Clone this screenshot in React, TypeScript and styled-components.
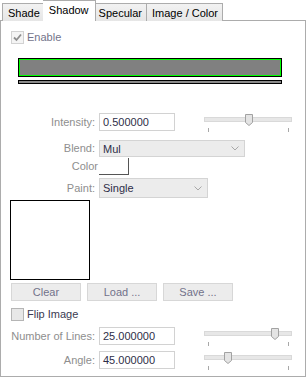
import React from "react";
import styled, { createGlobalStyle } from "styled-components";

const Global = createGlobalStyle`
  html, body { margin: 0; padding: 0; background: #ffffff; overflow: hidden; }
  body { font-family: "Liberation Sans", Arial, sans-serif; font-size: 11px; }
  * { box-sizing: border-box; }
`;

const Root = styled.div`
  width: 306px;
  height: 377px;
  display: flex;
  flex-direction: column;
`;

const TabBar = styled.div`
  display: flex;
  align-items: flex-start;
  height: 21px;
  padding-left: 2px;
  margin-bottom: -1px;
  position: relative;
  z-index: 1;
`;

const Tab = styled.div<{ $active?: boolean }>`
  font-size: 11px;
  color: #000;
  border: 1px solid #acacac;
  white-space: nowrap;
  display: flex;
  align-items: center;
  ${(p) =>
    p.$active
      ? `
    height: 21px;
    margin: 0 -2px;
    padding: 0 6px 3px;
    background: #ffffff;
    border-bottom: none;
    position: relative;
    z-index: 2;
  `
      : `
    height: 18px;
    margin-top: 3px;
    padding: 0 4px 0 5px;
    background: linear-gradient(#f2f2f2, #e6e6e6);
    border-bottom: none;
  `}
  & + & { border-left: none; }
`;

const Panel = styled.div`
  border: 1px solid #acacac;
  background: #ffffff;
  height: 380px;
  display: flex;
  flex-direction: column;
`;

const CheckRow = styled.div<{ $mt: number }>`
  display: flex;
  align-items: center;
  gap: 2px;
  margin-top: ${(p) => p.$mt}px;
  margin-left: 10px;
  height: 13px;
`;

const CheckBox = styled.div<{ $disabled?: boolean }>`
  width: 13px;
  height: 13px;
  border: 1px solid ${(p) => (p.$disabled ? "#d2d2d2" : "#b5b5b5")};
  background: ${(p) => (p.$disabled ? "#f4f4f4" : "#e7e7e7")};
  display: flex;
  align-items: center;
  justify-content: center;
`;

const CheckLabel = styled.span<{ $disabled?: boolean }>`
  margin-left: 1px;
  font-size: 11px;
  color: ${(p) => (p.$disabled ? "#73738a" : "#3a3a50")};
  line-height: 13px;
`;

const ColorBar = styled.div`
  margin-top: 14px;
  margin-left: 17px;
  width: 264px;
  height: 19px;
  border: 1px solid #000;
  display: flex;
`;

const ColorFill = styled.div`
  flex: 1;
  border: 1px solid #00ff00;
  background: #808080;
`;

const ThinBar = styled.div`
  margin-top: 3px;
  margin-left: 17px;
  width: 264px;
  height: 4px;
  border: 1px solid #000;
  background: #8a8a8a;
`;

const FormRow = styled.div<{ $mt: number }>`
  display: flex;
  align-items: flex-start;
  margin-top: ${(p) => p.$mt}px;
`;

const Label = styled.div<{ $w?: number; $h: number }>`
  width: ${(p) => p.$w ?? 94}px;
  margin-right: ${(p) => 98 - (p.$w ?? 94)}px;
  height: ${(p) => p.$h}px;
  line-height: ${(p) => p.$h}px;
  text-align: right;
  color: #8e8e8e;
  font-size: 11px;
  white-space: nowrap;
`;

const Input = styled.div`
  width: 76px;
  height: 18px;
  border: 1px solid #d2d2d2;
  background: #fff;
  padding-left: 3px;
  line-height: 16px;
  font-size: 11px;
  color: #2e2e48;
`;

const Select = styled.div<{ $w: number; $h: number }>`
  width: ${(p) => p.$w}px;
  height: ${(p) => p.$h}px;
  border: 1px solid #d4d4d4;
  background: #ececec;
  display: flex;
  align-items: center;
  justify-content: space-between;
  padding: 0 5px 0 3px;
  font-size: 11px;
  color: #2e2e48;
`;

const Swatch = styled.div`
  width: 30px;
  height: 17px;
  background: #fff;
  border-right: 1px solid #555;
  border-bottom: 1px solid #555;
`;

const SliderBox = styled.div`
  position: relative;
  width: 88px;
  height: 19px;
  margin-left: 29px;
  margin-top: 1px;
`;

const Track = styled.div`
  position: absolute;
  left: 0;
  right: 0;
  top: 3px;
  height: 5px;
  border: 1px solid #d9d9d9;
  background: #e7e7e7;
`;

const Tick = styled.div<{ $x: number }>`
  position: absolute;
  top: 14px;
  left: ${(p) => p.$x}px;
  width: 1px;
  height: 4px;
  background: #a8a8a8;
`;

const Thumb = styled.svg`
  position: absolute;
  top: 0;
  width: 8px;
  height: 12px;
`;

const ImageBox = styled.div`
  margin-top: 2px;
  margin-left: 9px;
  width: 80px;
  height: 80px;
  border: 1px solid #000;
  background: #fff;
`;

const ButtonRow = styled.div`
  display: flex;
  gap: 6px;
  margin-top: 3px;
  margin-left: 10px;
`;

const Button = styled.div`
  width: 70px;
  height: 18px;
  border: 1px solid #d7d7d7;
  background: #ececec;
  color: #72728a;
  font-size: 11px;
  display: flex;
  align-items: center;
  justify-content: center;
`;

const Chevron = () => (
  <svg width="8" height="5" viewBox="0 0 8 5">
    <path d="M0.5 0.5 L4 4 L7.5 0.5" fill="none" stroke="#a8a8a8" strokeWidth="1" />
  </svg>
);

const Check = () => (
  <svg width="9" height="9" viewBox="0 0 9 9">
    <path d="M1 4.5 L3.5 7 L8 1.5" fill="none" stroke="#8e8e8e" strokeWidth="1.8" />
  </svg>
);

const Slider = ({ pos }: { pos: number }) => (
  <SliderBox>
    <Track />
    <Tick $x={4} />
    <Tick $x={84} />
    <Thumb viewBox="0 0 8 12" style={{ left: pos }}>
      <polygon points="0.5,0.5 7.5,0.5 7.5,8.5 4,11.5 0.5,8.5" fill="#e4e4e4" stroke="#a2a2a2" strokeWidth="1" />
    </Thumb>
  </SliderBox>
);

export default function App() {
  return (
    <>
      <Global />
      <Root>
        <TabBar>
          <Tab>Shade</Tab>
          <Tab $active>Shadow</Tab>
          <Tab>Specular</Tab>
          <Tab>Image / Color</Tab>
        </TabBar>
        <Panel>
          <CheckRow $mt={10}>
            <CheckBox $disabled>
              <Check />
            </CheckBox>
            <CheckLabel $disabled>Enable</CheckLabel>
          </CheckRow>
          <ColorBar>
            <ColorFill />
          </ColorBar>
          <ThinBar />
          <FormRow $mt={29}>
            <Label $h={18}>Intensity:</Label>
            <Input>0.500000</Input>
            <Slider pos={41} />
          </FormRow>
          <FormRow $mt={7}>
            <Label $h={17}>Blend:</Label>
            <Select $w={146} $h={17}>
              <span>Mul</span>
              <Chevron />
            </Select>
          </FormRow>
          <FormRow $mt={1}>
            <Label $h={17} $w={97}>Color</Label>
            <Swatch />
          </FormRow>
          <FormRow $mt={3}>
            <Label $h={20}>Paint:</Label>
            <Select $w={109} $h={20}>
              <span>Single</span>
              <Chevron />
            </Select>
          </FormRow>
          <ImageBox />
          <ButtonRow>
            <Button>Clear</Button>
            <Button>Load ...</Button>
            <Button>Save ...</Button>
          </ButtonRow>
          <CheckRow $mt={7}>
            <CheckBox />
            <CheckLabel>Flip Image</CheckLabel>
          </CheckRow>
          <FormRow $mt={6}>
            <Label $h={18}>Number of Lines:</Label>
            <Input>25.000000</Input>
            <Slider pos={67} />
          </FormRow>
          <FormRow $mt={4}>
            <Label $h={18}>Angle:</Label>
            <Input>45.000000</Input>
            <Slider pos={20} />
          </FormRow>
        </Panel>
      </Root>
    </>
  );
}
